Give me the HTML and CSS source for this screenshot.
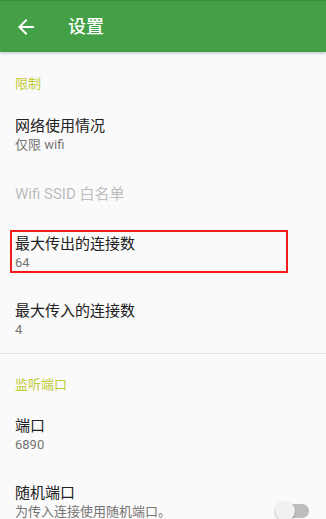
FILE: index.html
```html
<!DOCTYPE html>
<html lang="zh-CN">
<head>
    <meta charset="UTF-8">
    <meta name="viewport" content="width=device-width, initial-scale=1.0">
    <title>设置</title>
    <link rel="stylesheet" href="styles.css">
</head>
<body>
    <div class="appbar">
        <svg class="back" width="24" height="24" viewBox="0 0 24 24">
            <path d="M20 11H7.83l5.59-5.59L12 4l-8 8 8 8 1.41-1.41L7.83 13H20v-2z" fill="#fff"/>
        </svg>
        <div class="appbar-title">设置</div>
    </div>

    <div class="settings">
        <div class="category">限制</div>
        <div class="pref">
            <div class="pref-text">
                <div class="pref-title">网络使用情况</div>
                <div class="pref-summary">仅限 wifi</div>
            </div>
        </div>
        <div class="pref disabled">
            <div class="pref-text">
                <div class="pref-title">Wifi SSID 白名单</div>
            </div>
        </div>
        <div class="pref marked">
            <div class="pref-text">
                <div class="pref-title">最大传出的连接数</div>
                <div class="pref-summary">64</div>
            </div>
        </div>
        <div class="pref">
            <div class="pref-text">
                <div class="pref-title">最大传入的连接数</div>
                <div class="pref-summary">4</div>
            </div>
        </div>

        <div class="category with-divider">监听端口</div>
        <div class="pref">
            <div class="pref-text">
                <div class="pref-title">端口</div>
                <div class="pref-summary">6890</div>
            </div>
        </div>
        <div class="pref">
            <div class="pref-text">
                <div class="pref-title">随机端口</div>
                <div class="pref-summary">为传入连接使用随机端口。</div>
            </div>
            <div class="switch">
                <div class="switch-track"></div>
                <div class="switch-thumb"></div>
            </div>
        </div>
    </div>
</body>
</html>
```

FILE: styles.css
```css
body {
    margin: 0;
    width: 326px;
    height: 519px;
    overflow: hidden;
    background-color: #fafafa;
    font-family: Roboto, "Noto Sans CJK SC", sans-serif;
}
.appbar {
    display: flex;
    align-items: center;
    height: 51px;
    border-top: 1px solid #388e3c;
    background: #43a047;
    box-shadow: 0 1px 3px rgba(0, 0, 0, 0.25);
    position: relative;
    z-index: 1;
}
.back {
    margin-left: 14px;
    margin-top: 1px;
}
.appbar-title {
    margin-left: 30px;
    color: #fff;
    font-size: 18px;
    font-weight: 500;
    line-height: 24px;
}
.category {
    padding: 23px 16px 8px 15px;
    font-size: 13px;
    line-height: 18px;
    color: #c0ca33;
}
.category.with-divider {
    padding-top: 22px;
    padding-bottom: 7px;
    border-top: 1px solid #e6e6e6;
}
.pref {
    display: flex;
    align-items: center;
    padding: 14.5px 17px 14.5px 15px;
    position: relative;
}
.pref-text {
    flex: 1;
}
.pref-title {
    font-size: 15px;
    line-height: 20px;
    color: #212121;
}
.pref-summary {
    font-size: 13px;
    line-height: 18px;
    color: #757575;
}
.pref.disabled {
    padding-top: 15.5px;
    padding-bottom: 15.5px;
}
.pref.disabled .pref-title {
    color: #bdbdbd;
}
.pref.marked::after {
    content: "";
    position: absolute;
    left: 10px;
    top: 11px;
    width: 278px;
    height: 43px;
    box-sizing: border-box;
    border: 2px solid #f21c1c;
}
.switch {
    position: relative;
    width: 34px;
    height: 20px;
    margin-top: 18px;
}
.switch-track {
    position: absolute;
    left: 0;
    top: 3px;
    width: 34px;
    height: 14px;
    border-radius: 7px;
    background: #bdbdbd;
}
.switch-thumb {
    position: absolute;
    left: 0;
    top: 0;
    width: 20px;
    height: 20px;
    border-radius: 50%;
    background: #f1f1f1;
    box-shadow: 0 1px 2px rgba(0, 0, 0, 0.3);
}
```
